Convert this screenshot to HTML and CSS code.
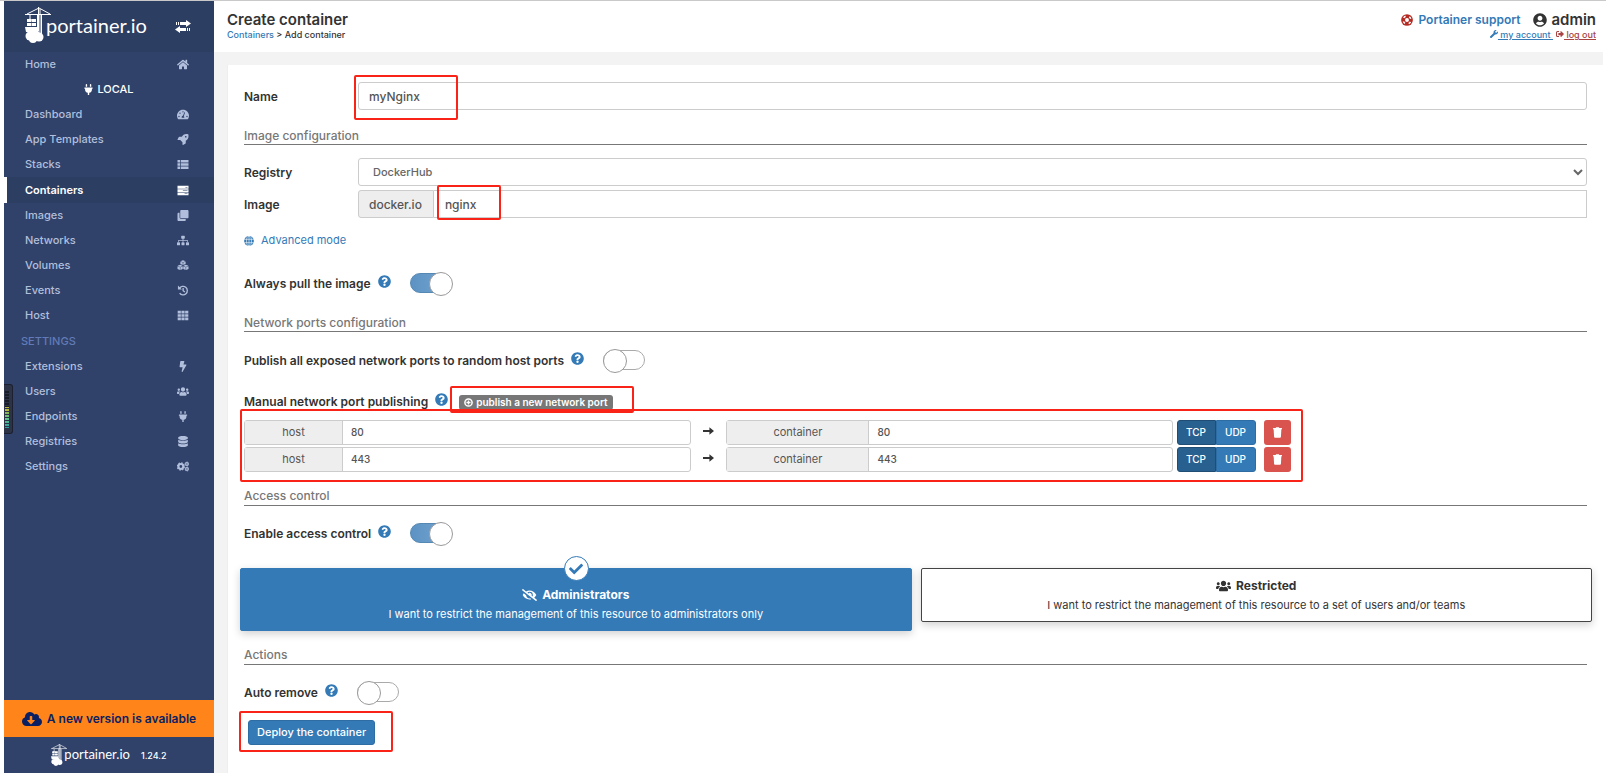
FILE: index.html
```html
<!DOCTYPE html>
<html lang="en">
<head>
<meta charset="utf-8">
<title>Portainer - Create container</title>
<link rel="stylesheet" href="styles.css">
</head>
<body>
<svg class="sprite" aria-hidden="true">
  <symbol id="i-home" viewBox="0 0 576 512"><path d="M280.37 148.26L96 300.11V464a16 16 0 0 0 16 16l112.06-.29a16 16 0 0 0 15.92-16V368a16 16 0 0 1 16-16h64a16 16 0 0 1 16 16v95.64a16 16 0 0 0 16 16.05L464 480a16 16 0 0 0 16-16V300L295.67 148.26a12.19 12.19 0 0 0-15.3 0zM571.6 251.47L488 182.56V44.05a12 12 0 0 0-12-12h-56a12 12 0 0 0-12 12v72.61L318.47 43a48 48 0 0 0-61 0L4.34 251.47a12 12 0 0 0-1.6 16.9l25.5 31A12 12 0 0 0 45.15 301l235.22-193.74a12.19 12.19 0 0 1 15.3 0L530.9 301a12 12 0 0 0 16.9-1.6l25.5-31a12 12 0 0 0-1.7-16.93z"/></symbol>
  <symbol id="i-plug" viewBox="0 0 384 512"><path d="M320 32a32 32 0 0 0-64 0v96h64zm48 128H16A16 16 0 0 0 0 176v32a16 16 0 0 0 16 16h16v32a160.07 160.07 0 0 0 128 156.8V512h64v-99.2A160.07 160.07 0 0 0 352 256v-32h16a16 16 0 0 0 16-16v-32a16 16 0 0 0-16-16zM128 32a32 32 0 0 0-64 0v96h64z"/></symbol>
  <symbol id="i-gauge" viewBox="0 0 576 512"><path fill-rule="evenodd" d="M288 32C129 32 0 161 0 320c0 53 14 102 39 145 6 9 16 15 27 15h444c11 0 21-6 27-15 25-43 39-92 39-145C576 161 447 32 288 32zm0 64a32 32 0 1 1 0 64 32 32 0 0 1 0-64zM96 384a32 32 0 1 1 0-64 32 32 0 0 1 0 64zm48-160a32 32 0 1 1 0-64 32 32 0 0 1 0 64zm202 192H230c-4-10-6-20-6-32 0-35 28-64 63-64l62-165c5-13 40-4 35 13l-60 168c17 12 28 28 28 48 0 12-2 22-6 32zm134-32a32 32 0 1 1 0-64 32 32 0 0 1 0 64z"/></symbol>
  <symbol id="i-rocket" viewBox="0 0 512 512"><path fill-rule="evenodd" d="M505 19c-1-6-6-11-12-12-32-7-57-7-82-7-103 0-165 55-211 128H95c-16 0-35 12-42 26L3 253c-7 14 3 27 21 27h104l104 104v104c0 18 13 28 27 21l99-50c14-7 26-26 26-42V312c73-46 128-108 128-211 0-25 0-50-7-82zM384 168a40 40 0 1 1 0-80 40 40 0 0 1 0 80z"/></symbol>
  <symbol id="i-list" viewBox="0 0 512 512"><path d="M0 48h128v112H0zM160 48h352v112H160zM0 200h128v112H0zM160 200h352v112H160zM0 352h128v112H0zM160 352h352v112H160z"/></symbol>
  <symbol id="i-server" viewBox="0 0 512 512"><path fill-rule="evenodd" d="M0 40h512v130H0zM370 92v24h96V92zM0 192h512v130H0zM250 244v24h216v-24zM0 344h512v130H0zM330 396v24h136v-24z"/></symbol>
  <symbol id="i-clone" viewBox="0 0 512 512"><path d="M464 0c26.500 0 48 21.500 48 48v288c0 26.500-21.500 48-48 48H176c-26.500 0-48-21.500-48-48V48c0-26.500 21.500-48 48-48h288M176 416c-44 0-80-36-80-80V128H48c-26.500 0-48 21.500-48 48v288c0 26.500 21.500 48 48 48h288c26.500 0 48-21.500 48-48v-48H176z"/></symbol>
  <symbol id="i-sitemap" viewBox="0 0 640 512"><path d="M128 352H32a32 32 0 0 0-32 32v96a32 32 0 0 0 32 32h96a32 32 0 0 0 32-32v-96a32 32 0 0 0-32-32zm-24-80h192v48h48v-48h192v48h48v-57a39 39 0 0 0-39-39H344v-64h40a32 32 0 0 0 32-32V32a32 32 0 0 0-32-32H256a32 32 0 0 0-32 32v96a32 32 0 0 0 32 32h40v64H95a39 39 0 0 0-39 39v57h48zm264 80h-96a32 32 0 0 0-32 32v96a32 32 0 0 0 32 32h96a32 32 0 0 0 32-32v-96a32 32 0 0 0-32-32zm240 0h-96a32 32 0 0 0-32 32v96a32 32 0 0 0 32 32h96a32 32 0 0 0 32-32v-96a32 32 0 0 0-32-32z"/></symbol>
  <symbol id="i-cubes" viewBox="0 0 512 512"><path d="M256 10l122 46-122 48-122-48zM134 80l110 42v112l-110-46zM378 80v108l-110 46V122zM122 226l116 46-116 48L6 272zM390 226l116 46-116 48-116-48zM0 296l112 44v130L0 424zM244 296v128l-112 46V340zM268 296l112 44v130l-112-46zM512 296v128l-112 46V340z"/></symbol>
  <symbol id="i-history" viewBox="0 0 512 512"><path fill="none" stroke="currentColor" stroke-width="62" d="M92 160a196 196 0 1 1 8 214M262 140v128l82 58"/><path d="M20 24v184h184z"/></symbol>
  <symbol id="i-th" viewBox="0 0 512 512"><path d="M8 40h148v124H8zM182 40h148v124H182zM356 40h148v124H356zM8 194h148v124H8zM182 194h148v124H182zM356 194h148v124H356zM8 348h148v124H8zM182 348h148v124H182zM356 348h148v124H356z"/></symbol>
  <symbol id="i-bolt" viewBox="0 0 320 512"><path d="M296 160H180.600l42.600-129.800C227.200 15 215.700 0 200 0H56C44 0 33.800 8.900 32.200 20.800l-32 240C-1.700 275.200 9.500 288 24 288h118.700L96.600 482.500c-3.600 15.200 8 29.500 23.300 29.500 8.400 0 16.400-4.400 20.800-12l176-304c9.300-15.900-2.200-36-20.700-36z"/></symbol>
  <symbol id="i-users" viewBox="0 0 640 512"><path d="M96 224c35.300 0 64-28.700 64-64s-28.700-64-64-64-64 28.700-64 64 28.700 64 64 64zm448 0c35.300 0 64-28.700 64-64s-28.700-64-64-64-64 28.700-64 64 28.700 64 64 64zm32 32h-64c-17.600 0-33.500 7.100-45.100 18.600 40.300 22.100 68.900 62 75.100 109.400h66c17.700 0 32-14.300 32-32v-32c0-35.300-28.700-64-64-64zm-256 0c61.900 0 112-50.100 112-112S381.900 32 320 32 208 82.100 208 144s50.100 112 112 112zm76.800 32h-8.300c-20.800 10-43.900 16-68.500 16s-47.600-6-68.500-16h-8.300C179.600 288 128 339.600 128 403.200V432c0 26.500 21.500 48 48 48h288c26.500 0 48-21.500 48-48v-28.800c0-63.600-51.600-115.200-115.200-115.200zm-223.700-13.400C161.500 263.100 145.600 256 128 256H64c-35.300 0-64 28.700-64 64v32c0 17.700 14.300 32 32 32h65.900c6.300-47.400 34.900-87.300 75.200-109.400z"/></symbol>
  <symbol id="i-db" viewBox="0 0 448 512"><path d="M448 73v46c0 40-100 73-224 73S0 159 0 119V73C0 33 100 0 224 0s224 33 224 73zM448 176v103c0 40-100 73-224 73S0 319 0 279V176c48 33 136 49 224 49s176-16 224-49zm0 160v103c0 40-100 73-224 73S0 479 0 439V336c48 33 136 49 224 49s176-16 224-49z"/></symbol>
  <symbol id="i-cogs" viewBox="0 0 640 512"><circle cx="206" cy="256" r="130" fill="none" stroke="currentColor" stroke-width="112"/><circle cx="206" cy="256" r="190" fill="none" stroke="currentColor" stroke-width="64" stroke-dasharray="75 74"/><circle cx="530" cy="120" r="70" fill="none" stroke="currentColor" stroke-width="66"/><circle cx="530" cy="120" r="108" fill="none" stroke="currentColor" stroke-width="40" stroke-dasharray="48 48"/><circle cx="530" cy="392" r="70" fill="none" stroke="currentColor" stroke-width="66"/><circle cx="530" cy="392" r="108" fill="none" stroke="currentColor" stroke-width="40" stroke-dasharray="48 48"/></symbol>
  <symbol id="i-swap" viewBox="0 0 16 13"><path d="M5 2h6V0l5 3.500L11 7V5H5zM3 2h1v3H3zM1 2h1v3H1zM11 8H5V6L0 9.500 5 13v-2h6zM12 8h1v3h-1zM14 8h1v3h-1z"/></symbol>
  <symbol id="i-cloud" viewBox="0 0 640 512"><path d="M537.600 226.600c4.100-10.700 6.400-22.400 6.400-34.600 0-53-43-96-96-96-19.700 0-38.100 6-53.300 16.200C367 64.200 315.300 32 256 32c-88.400 0-160 71.600-160 160 0 2.700.1 5.400.2 8.100C40.200 219.800 0 273.200 0 336c0 79.500 64.500 144 144 144h368c70.700 0 128-57.300 128-128 0-61.900-44-113.600-102.400-125.400zm-132.900 88.700L299.300 420.700c-6.200 6.200-16.400 6.200-22.600 0L171.300 315.300c-10.100-10.100-2.900-27.300 11.300-27.300H248V176c0-8.800 7.200-16 16-16h48c8.800 0 16 7.200 16 16v112h65.400c14.200 0 21.400 17.200 11.300 27.300z"/></symbol>
  <symbol id="i-help" viewBox="0 0 512 512"><path d="M504 256c0 137-111 248-248 248S8 393 8 256C8 119 119 8 256 8s248 111 248 248zM262.700 90c-54.500 0-89.300 23-116.600 63.800-3.500 5.200-2.300 12.400 2.700 16.200l34.700 26.300c5.200 4 12.600 3 16.700-2.100 17.900-22.700 30.100-35.800 57.300-35.800 20.400 0 45.700 13.100 45.700 33 0 15-12.400 22.600-32.500 33.900C247.100 238.500 216 255 216 296v4c0 6.600 5.400 12 12 12h56c6.600 0 12-5.400 12-12v-1.300c0-28.500 83.200-29.700 83.200-106.700 0-58-60.200-102-116.500-102zM256 338a46 46 0 1 0 0 92 46 46 0 0 0 0-92z"/></symbol>
  <symbol id="i-check" viewBox="0 0 512 512"><path d="M173.900 439.400L7.500 273c-10-10-10-26.200 0-36.200l36.200-36.200c10-10 26.200-10 36.200 0L192 312.700 432.100 72.600c10-10 26.200-10 36.200 0l36.200 36.200c10 10 10 26.200 0 36.200L210.100 439.400c-10 10-26.200 10-36.200 0z"/></symbol>
  <symbol id="i-user" viewBox="0 0 496 512"><path d="M248 8C111 8 0 119 0 256s111 248 248 248 248-111 248-248S385 8 248 8zm0 96c48.600 0 88 39.400 88 88s-39.400 88-88 88-88-39.400-88-88 39.400-88 88-88zm0 344c-58.700 0-111.300-26.600-146.500-68.200 18.800-35.400 55.600-59.800 98.500-59.800 2.400 0 4.800.4 7.100 1.100 13 4.200 26.600 6.900 40.900 6.900s28-2.700 40.900-6.900c2.300-.7 4.700-1.100 7.100-1.100 42.900 0 79.700 24.400 98.500 59.800C359.300 421.400 306.700 448 248 448z"/></symbol>
  <symbol id="i-ring" viewBox="0 0 512 512"><circle cx="256" cy="256" r="250"/><circle cx="256" cy="256" r="168" fill="none" stroke="#fff" stroke-width="64" stroke-dasharray="100 164" stroke-dashoffset="-82"/><circle cx="256" cy="256" r="84" fill="#fff"/></symbol>
  <symbol id="i-wrench" viewBox="0 0 512 512"><path d="M507.700 109.100c-2.200-9-13.500-12.100-20.100-5.500l-74.400 74.400-67.900-11.300-11.300-67.900 74.400-74.400c6.600-6.600 3.400-17.900-5.700-20.200-47.400-11.700-99.500.9-136.600 37.900-39.600 39.600-50.500 97.100-34 147.200L18.700 402.800c-25 25-25 65.500 0 90.500s65.500 25 90.500 0l213.200-213.200c50.100 16.700 107.500 5.700 147.400-34.200 37.100-37.100 49.700-89.300 37.900-136.800z"/></symbol>
  <symbol id="i-out" viewBox="0 0 512 512"><path d="M192 64H96a96 96 0 0 0-96 96v192a96 96 0 0 0 96 96h96v-66H96a30 30 0 0 1-30-30V160a30 30 0 0 1 30-30h96zM500 240L330 72c-14-14-40-4-40 18v94H150v144h140v94c0 22 26 32 40 18l170-168c10-10 10-22 0-32z"/></symbol>
  <symbol id="i-globe" viewBox="0 0 512 512"><circle cx="256" cy="256" r="250"/><path fill="none" stroke="#fff" stroke-width="30" d="M256 0v512M10 170h492M10 342h492"/><ellipse cx="256" cy="256" rx="126" ry="250" fill="none" stroke="#fff" stroke-width="30"/></symbol>
  <symbol id="i-plus" viewBox="0 0 512 512"><circle cx="256" cy="256" r="205" fill="none" stroke="currentColor" stroke-width="86"/><path d="M218 140h76v78h78v76h-78v78h-76v-78h-78v-76h78z"/></symbol>
  <symbol id="i-arrow" viewBox="0 0 12 8"><path d="M0 3h7V0l5 4-5 4V5H0z"/></symbol>
  <symbol id="i-trash" viewBox="0 0 448 512"><path d="M432 32H312l-9-19a24 24 0 0 0-22-13H167a24 24 0 0 0-22 13l-9 19H16A16 16 0 0 0 0 48v32a16 16 0 0 0 16 16h416a16 16 0 0 0 16-16V48a16 16 0 0 0-16-16zM53 467a48 48 0 0 0 48 45h246a48 48 0 0 0 48-45l21-371H32z"/></symbol>
  <symbol id="i-eyeslash" viewBox="0 0 640 512"><path d="M320 400c-75.900 0-137.300-58.700-142.900-133.100L72.200 185.800c-13.800 17.300-26.500 35.600-36.700 55.600a32.400 32.400 0 0 0 0 29.200C89.700 376.400 197.100 448 320 448c26.900 0 52.900-4 77.900-10.500L346 397.400a144.100 144.100 0 0 1-26 2.600zm313.800 58.100l-110.500-85.400a331.300 331.300 0 0 0 81.200-102.100 32.400 32.400 0 0 0 0-29.200C550.300 135.600 442.900 64 320 64a308.200 308.200 0 0 0-147.300 37.700L45.500 3.400A16 16 0 0 0 23 6.200L3.400 31.500A16 16 0 0 0 6.200 53.900l588.300 454.700a16 16 0 0 0 22.500-2.800l19.600-25.300a16 16 0 0 0-2.800-22.400zM450.100 316.100l-39.300-30.400A94.800 94.800 0 0 0 416 256a94.800 94.800 0 0 0-121.300-92.200A47.700 47.700 0 0 1 304 192a46.600 46.600 0 0 1-1.500 10l-73.600-56.900A142.300 142.300 0 0 1 320 112a143.900 143.900 0 0 1 144 144c0 21.600-5.300 41.800-13.900 60.100z"/></symbol>
  <symbol id="i-crane" viewBox="0 0 26 36"><path fill="none" stroke="currentColor" d="M0 7.500h26M2 7l12-6 11 6M13.500 0v24M16.500 8v22M15 2v26M12.500 8v16M5 8v4M5 12l-3 2M5 12l3 2"/><path d="M2 12h4v3H2zM6.500 12H11v3H6.500zM2 16h4v3H2zM6.500 16H11v3H6.500zM0 20h12v5H1z"/><circle cx="5" cy="29" r="4.500"/><circle cx="10" cy="27" r="4.500"/><circle cx="14" cy="30" r="4.500"/><circle cx="8" cy="32" r="4"/></symbol>
</svg>
<div class="app">
  <aside class="sidebar">
    <div class="brand">
      <a class="logo" href="#"><svg class="crane"><use href="#i-crane"/></svg><span>portainer.io</span></a>
      <button class="swap" type="button" aria-label="Toggle sidebar"><svg><use href="#i-swap"/></svg></button>
    </div>
    <nav class="nav">
      <a href="#">Home<svg><use href="#i-home"/></svg></a>
      <div class="endpoint"><svg><use href="#i-plug"/></svg>LOCAL</div>
      <a href="#">Dashboard<svg><use href="#i-gauge"/></svg></a>
      <a href="#">App Templates<svg><use href="#i-rocket"/></svg></a>
      <a href="#">Stacks<svg><use href="#i-list"/></svg></a>
      <a href="#" class="active">Containers<svg><use href="#i-server"/></svg></a>
      <a href="#">Images<svg><use href="#i-clone"/></svg></a>
      <a href="#">Networks<svg><use href="#i-sitemap"/></svg></a>
      <a href="#">Volumes<svg><use href="#i-cubes"/></svg></a>
      <a href="#">Events<svg><use href="#i-history"/></svg></a>
      <a href="#">Host<svg><use href="#i-th"/></svg></a>
      <div class="group">SETTINGS</div>
      <a href="#">Extensions<svg><use href="#i-bolt"/></svg></a>
      <a href="#">Users<svg><use href="#i-users"/></svg></a>
      <a href="#">Endpoints<svg><use href="#i-plug"/></svg></a>
      <a href="#">Registries<svg><use href="#i-db"/></svg></a>
      <a href="#">Settings<svg><use href="#i-cogs"/></svg></a>
    </nav>
    <a class="update" href="#"><svg><use href="#i-cloud"/></svg>A new version is available</a>
    <div class="foot"><span class="logo small"><svg class="crane"><use href="#i-crane"/></svg><span>portainer.io</span></span><span>1.24.2</span></div>
    <div class="meter"><div class="bars"></div></div>
  </aside>

  <main class="main">
    <header class="top">
      <div>
        <h1>Create container</h1>
        <div class="crumbs"><a href="#">Containers</a> &gt; Add container</div>
      </div>
      <div class="account">
        <div class="who"><a class="support" href="#"><svg><use href="#i-ring"/></svg>Portainer support</a><span class="user"><svg><use href="#i-user"/></svg>admin</span></div>
        <div class="links"><a href="#"><svg><use href="#i-wrench"/></svg><u> my account </u></a><a class="logout" href="#"><svg><use href="#i-out"/></svg><u> log out</u></a></div>
      </div>
    </header>

    <form class="panel">
      <div class="row">
        <label for="name">Name</label>
        <div class="field"><input class="text" id="name" value="myNginx"><i class="mark mark-name"></i></div>
      </div>
      <h2>Image configuration</h2>
      <div class="row registry">
        <label for="registry">Registry</label>
        <select class="field" id="registry"><option>DockerHub</option></select>
      </div>
      <div class="row image">
        <label for="image">Image</label>
        <div class="field"><span class="addon">docker.io</span><input class="text joined" id="image" value="nginx"><i class="mark mark-image"></i></div>
      </div>
      <a class="advanced" href="#"><svg><use href="#i-globe"/></svg>Advanced mode</a>
      <div class="switch-row"><label for="pull">Always pull the image</label><svg class="help"><use href="#i-help"/></svg><input type="checkbox" class="switch" id="pull" checked></div>

      <h2 class="wide">Network ports configuration</h2>
      <div class="switch-row"><label for="all">Publish all exposed network ports to random host ports</label><svg class="help"><use href="#i-help"/></svg><input type="checkbox" class="switch" id="all"></div>
      <div class="manual"><strong>Manual network port publishing</strong><svg class="help"><use href="#i-help"/></svg><span class="publish"><button type="button"><svg><use href="#i-plus"/></svg>publish a new network port</button><i class="mark mark-publish"></i></span></div>
      <div class="ports">
        <div class="port">
          <div class="group-in host"><label for="h1">host</label><input id="h1" value="80"></div>
          <svg class="arrow"><use href="#i-arrow"/></svg>
          <div class="group-in cont"><label for="c1">container</label><input id="c1" value="80"></div>
          <div class="proto"><button type="button" class="on">TCP</button><button type="button">UDP</button></div>
          <button type="button" class="del" aria-label="Remove"><svg><use href="#i-trash"/></svg></button>
        </div>
        <div class="port">
          <div class="group-in host"><label for="h2">host</label><input id="h2" value="443"></div>
          <svg class="arrow"><use href="#i-arrow"/></svg>
          <div class="group-in cont"><label for="c2">container</label><input id="c2" value="443"></div>
          <div class="proto"><button type="button" class="on">TCP</button><button type="button">UDP</button></div>
          <button type="button" class="del" aria-label="Remove"><svg><use href="#i-trash"/></svg></button>
        </div>
        <i class="mark mark-ports"></i>
      </div>

      <h2 class="near">Access control</h2>
      <div class="switch-row tight"><label for="access">Enable access control</label><svg class="help"><use href="#i-help"/></svg><input type="checkbox" class="switch" id="access" checked></div>
      <div class="boxes">
        <button type="button" class="box chosen"><span class="tick"><svg><use href="#i-check"/></svg></span><b><svg><use href="#i-eyeslash"/></svg>Administrators</b><span>I want to restrict the management of this resource to administrators only</span></button>
        <button type="button" class="box"><b><svg><use href="#i-users"/></svg>Restricted</b><span>I want to restrict the management of this resource to a set of users and/or teams</span></button>
      </div>

      <h2 class="near">Actions</h2>
      <div class="switch-row tight"><label for="remove">Auto remove</label><svg class="help"><use href="#i-help"/></svg><input type="checkbox" class="switch" id="remove"></div>
      <div class="deploy"><button type="submit">Deploy the container</button><i class="mark mark-deploy"></i></div>
    </form>
  </main>
</div>
</body>
</html>
```
FILE: styles.css
```css
* { box-sizing: border-box; }
body { margin: 0; background: #fff; color: #333; font: 500 11px/17px Inter, "Liberation Sans", sans-serif; }
svg { fill: currentColor; flex: none; overflow: visible; }
a { color: #337ab7; text-decoration: none; }
button, input, select { font: inherit; color: inherit; margin: 0; }
button { border: 0; padding: 0; cursor: pointer; }
.sprite { position: absolute; width: 0; height: 0; }
.app { display: flex; min-height: 100vh; padding: 0 3px 0 4px; border-top: 1px solid #c9c9c9; }

/* Sidebar */
.sidebar { position: relative; display: flex; flex-direction: column; flex: 0 0 210px; background: #30426a; color: #b2bfdc; }
.brand { display: flex; align-items: center; justify-content: space-between; height: 51px; padding: 0 23px 0 21px; background: #2d3e63; color: #fff; }
.logo { display: flex; align-items: flex-start; color: #fff; font: 400 20px/28px Lato, sans-serif; }
.crane { width: 26px; height: 36px; margin-right: -5px; }
.brand .crane { margin-top: -4px; }
.swap { background: none; color: #fff; }
.swap svg { display: block; width: 16px; height: 13px; }
.nav { flex: 1; }
.nav a, .group, .endpoint { display: flex; align-items: center; height: 25px; }
.nav a { justify-content: space-between; padding: 0 25px 0 21px; color: inherit; }
.nav a svg { width: 12px; height: 11px; }
.nav .active { height: 26px; background: #2d3e63; border-left: 3px solid #fff; padding-left: 18px; color: #fff; font-weight: 600; }
.nav .endpoint { justify-content: center; gap: 4px; color: #fff; }
.endpoint svg { width: 9px; height: 11px; }
.nav .group { height: 26px; padding-left: 17px; color: #627bb7; }
.update { display: flex; align-items: center; justify-content: center; gap: 5px; height: 37px; background: #ff851b; color: #0b1f63; font-size: 12px; font-weight: 600; }
.update svg { width: 20px; height: 16px; }
.foot { display: flex; align-items: center; justify-content: center; gap: 11px; height: 36px; color: #fff; font-size: 9px; }
.small { font-size: 13px; line-height: 20px; }
.small .crane { width: 16px; height: 22px; margin-right: -3px; }
.meter { position: absolute; left: 0; top: 383px; width: 9px; height: 50px; padding: 5px 3px 5px 1px; background: #2c3347; border: 1px solid #1c2030; border-left: 0; border-radius: 0 3px 3px 0; }
.bars { height: 100%; background: repeating-linear-gradient(#2c3347 0 1px, transparent 1px 3px), linear-gradient(#181c26 45%, #b9b83f 45% 55%, #86b45a 60%, #62c48c 75%, #2f9aa0); }

/* Header */
.main { display: flex; flex-direction: column; flex: 1; min-width: 0; background: #f3f3f3; }
.top { display: flex; justify-content: space-between; height: 51px; padding: 9px 7px 0 13px; background: #fff; }
h1 { margin: 0; font-size: 15px; line-height: 20px; font-weight: 600; }
.crumbs, .links { font-size: 9px; line-height: 10px; }
.who { display: flex; align-items: center; gap: 13px; font-size: 15px; line-height: 20px; font-weight: 600; }
.support { display: flex; align-items: center; gap: 5px; font-size: 12px; }
.support svg { width: 12px; height: 12px; color: #b32b22; }
.user { display: flex; align-items: center; gap: 4px; }
.user svg { width: 14px; height: 14px; }
.links { display: flex; justify-content: flex-end; gap: 3px; white-space: pre; }
.links svg { width: 8px; height: 8px; }
.links .logout { color: #a94442; }

/* Form */
.panel { flex: 1; margin: 13px 0 0 13px; padding: 17px 16px; background: #fff; border-left: 1px solid #eee; }
.row { display: grid; grid-template-columns: 114px 1fr; align-items: center; height: 28px; }
.row label, .switch-row label, .manual strong { font-size: 12px; font-weight: 600; }
.field { position: relative; display: flex; height: 28px; min-width: 0; }
.text { flex: 1; min-width: 0; padding: 0 10px; border: 1px solid #ccc; border-radius: 3px; color: #555; font-size: 12px; }
.joined { border-left: 0; border-radius: 0; padding-left: 11px; }
.addon { display: flex; align-items: center; padding: 0 11px 0 10px; background: #eee; border: 1px solid #ccc; border-radius: 3px 0 0 3px; color: #555; font-size: 12px; }
select.field { display: block; width: 100%; padding: 0 2px 0 10px; background-color: #fff; border: 1px solid #ccc; border-radius: 3px; color: #666; }
h2 { margin: 17px 0 0; height: 18px; border-bottom: 1px solid #777; color: #777; font-size: 12px; line-height: 17px; font-weight: 500; }
.near { margin-top: 16px; line-height: 16px; }
.registry { margin-top: 13px; }
.image { margin-top: 4px; }
.advanced { display: flex; align-items: center; gap: 7px; margin: 14px 0 23px; font-weight: 400; }
.advanced svg { width: 10px; height: 10px; }
.switch-row, .manual { display: flex; align-items: center; height: 22px; margin-top: 17px; }
.manual { margin-top: 19px; }
.tight { margin-top: 16px; }
.wide { margin-top: 20px; }
.help { width: 13px; height: 13px; margin: -3px 19px 0 7px; color: #337ab7; }
.switch { position: relative; appearance: none; width: 42px; height: 20px; border: 1px solid #aaa; border-radius: 10px; background: #fff; }
.switch::before { content: ""; position: absolute; left: -1px; top: -2px; width: 22px; height: 22px; border: 1px solid #999; border-radius: 50%; background: #fff; }
.switch:checked { background: linear-gradient(90deg, #5c93c4, #76a5cf); border-color: #5588b3; }
.switch:checked::before { left: 18px; }
.manual .help { margin-right: 11px; }
.publish { position: relative; display: flex; padding-top: 2px; }
.publish button { display: flex; align-items: center; gap: 3px; height: 15px; padding: 0 5px; background: #777; border-radius: 3px; color: #fff; font-size: 10px; font-weight: 600; line-height: 15px; }
.publish svg { width: 9px; height: 9px; }

/* Port mappings */
.ports { position: relative; display: grid; gap: 2px; margin-top: 8px; width: 78%; padding-right: 1px; }
.port { display: flex; height: 25px; }
.group-in { display: flex; min-width: 0; border: 1px solid #ccc; border-radius: 3px; }
.host { flex: 448; }
.cont { flex: 447; }
.group-in label { display: flex; align-items: center; justify-content: center; width: 22%; flex: none; background: #eee; border-right: 1px solid #ccc; color: #555; font-weight: 400; }
.cont label { width: 32%; }
.group-in input { flex: 1; min-width: 0; border: 0; padding: 0 8px; color: #555; background: none; font-size: 10px; }
.arrow { width: 11px; height: 8px; margin: 7px 12px; }
.proto { display: flex; margin: 0 8px 0 4px; }
.proto button { width: 40px; background: #337ab7; color: #fff; border: 1px solid #2e6da4; border-radius: 0 3px 3px 0; font-size: 10px; }
.proto .on { width: 39px; background: #286090; border-color: #204d74; border-radius: 3px 0 0 3px; }
.del { display: grid; place-items: center; width: 27px; background: #d9534f; border-radius: 3px; color: #fff; }
.del svg { width: 9px; height: 11px; }

/* Access boxes */
.boxes { display: flex; align-items: flex-start; gap: 9px; margin: 24px -5px 0 -4px; }
.box { position: relative; display: flex; flex: 1; flex-direction: column; align-items: center; gap: 3px; padding: 8px 8px 7px; border: 1px solid #444; border-radius: 2px; background: #fff; color: #333; font-weight: 400; box-shadow: 0 3px 8px rgba(0, 0, 0, .18); }
.box b { display: flex; align-items: center; gap: 5px; font-size: 12px; font-weight: 700; }
.box b svg { width: 15px; height: 12px; }
.chosen { padding-top: 17px; background: #337ab7; border-color: #337ab7; color: #fff; }
.tick { position: absolute; top: -13px; left: 50%; margin-left: -12px; display: grid; place-items: center; width: 25px; height: 25px; border: 1px solid #337ab7; border-radius: 50%; background: #fff; color: #337ab7; }
.tick svg { width: 14px; height: 14px; }
.deploy { position: relative; display: inline-flex; margin: 17px 0 0 4px; }
.deploy button { height: 25px; padding: 0 8px; border: 1px solid #2e6da4; border-radius: 3px; background: #337ab7; color: #fff; }

/* Highlight frames */
.mark { position: absolute; border: 2px solid #fa2318; border-radius: 2px; pointer-events: none; }
.mark-name { left: -4px; top: -7px; width: 104px; height: 45px; }
.mark-image { left: 79px; top: -5px; width: 64px; height: 35px; }
.mark-publish { left: -9px; top: -7px; width: 184px; height: 27px; }
.mark-ports { left: -4px; right: -11px; top: -11px; bottom: -10px; }
.mark-deploy { left: -9px; top: -9px; width: 154px; height: 41px; }
```
